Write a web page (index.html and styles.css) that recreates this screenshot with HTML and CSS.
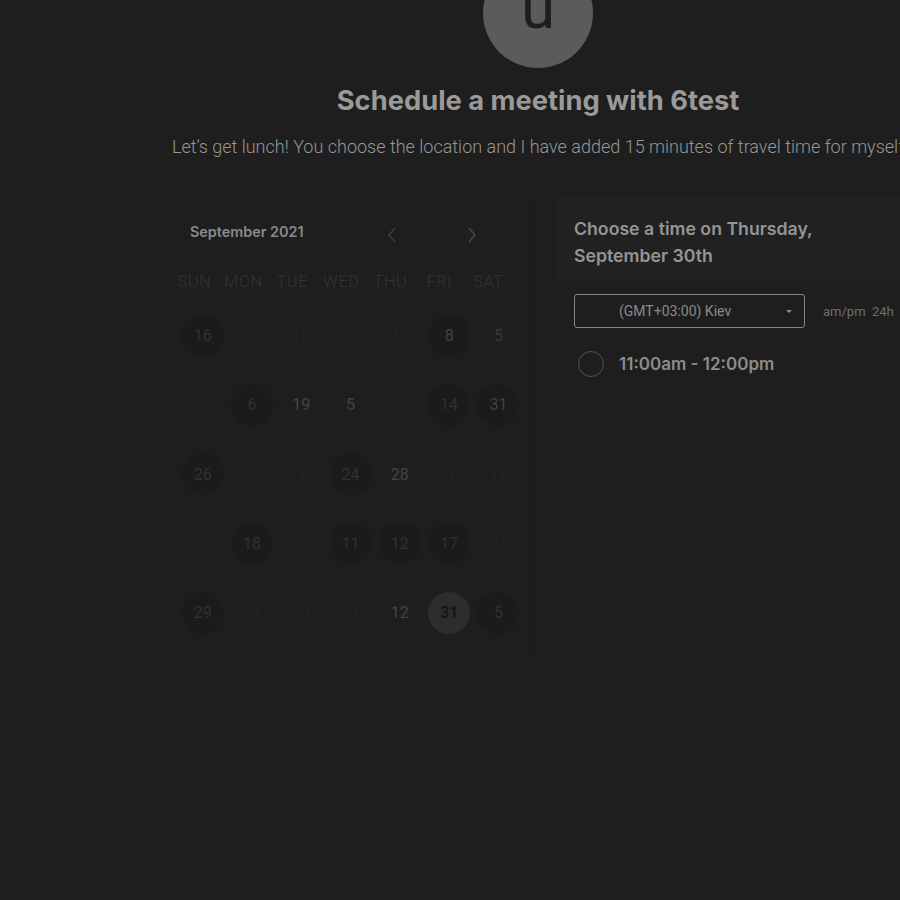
FILE: index.html
```html
<!DOCTYPE html>
<html lang="en">
<head>
<meta charset="utf-8">
<title>Schedule a meeting with 6test</title>
<link rel="stylesheet" href="styles.css">
</head>
<body>
<div class="page">
  <div class="avatar"><span>u</span></div>
  <h1 class="title">Schedule a meeting with 6test</h1>
  <p class="subtitle">Let’s get lunch! You choose the location and I have added 15 minutes of travel time for myself</p>

  <div class="booking">
    <section class="calendar">
      <div class="cal-head">
        <span class="month">September 2021</span>
        <span class="nav nav-prev"><svg width="10" height="16" viewBox="0 0 10 16"><path d="M8 1 L2 8 L8 15" fill="none" stroke="currentColor" stroke-width="1.4"/></svg></span>
        <span class="nav nav-next"><svg width="10" height="16" viewBox="0 0 10 16"><path d="M2 1 L8 8 L2 15" fill="none" stroke="currentColor" stroke-width="1.4"/></svg></span>
      </div>
      <div class="weekdays">
        <span>SUN</span><span>MON</span><span>TUE</span><span>WED</span><span>THU</span><span>FRI</span><span>SAT</span>
      </div>
      <div class="days">
        <span class="day circ">16</span><span class="day faint">17</span><span class="day faint">18</span><span class="day faint">15</span><span class="day faint">15</span><span class="day circ lit">8</span><span class="day plain dim">5</span>
        <span class="day faint">1</span><span class="day circ">6</span><span class="day plain">19</span><span class="day plain">5</span><span class="day faint">7</span><span class="day circ">14</span><span class="day circ lit">31</span>
        <span class="day circ">26</span><span class="day faint">4</span><span class="day faint">3</span><span class="day circ">24</span><span class="day plain">28</span><span class="day faint">4</span><span class="day faint">11</span>
        <span class="day faint">7</span><span class="day circ">18</span><span class="day faint">17</span><span class="day circ">11</span><span class="day circ">12</span><span class="day circ">17</span><span class="day faint">21</span>
        <span class="day circ">29</span><span class="day faint">11</span><span class="day faint">20</span><span class="day faint">21</span><span class="day plain">12</span><span class="day selected">31</span><span class="day circ">5</span>
      </div>
    </section>

    <section class="times">
      <div class="times-head">
        <h2>Choose a time on Thursday,<br>September 30th</h2>
      </div>
      <div class="tz-row">
        <div class="tz-select">
          <span class="tz-label">(GMT+03:00) Kiev</span>
          <span class="caret"></span>
        </div>
        <span class="fmt">am/pm&nbsp;&nbsp;24h</span>
      </div>
      <label class="slot">
        <span class="radio"></span>
        <span class="slot-text">11:00am - 12:00pm</span>
      </label>
    </section>
  </div>
</div>
</body>
</html>
```

FILE: styles.css
```css
html, body {
  margin: 0;
  padding: 0;
  background: #1e1e1e;
  overflow: hidden;
  height: 900px;
}

.page {
  width: 760px;
  margin-left: 158px;
  display: flex;
  flex-direction: column;
  align-items: center;
}

.avatar {
  width: 110px;
  height: 110px;
  margin-top: -42px;
  border-radius: 50%;
  background: #5b5b5b;
  display: flex;
  justify-content: center;
  align-items: flex-end;
}

.avatar span {
  font-family: Roboto, "Noto Sans", sans-serif;
  font-size: 62px;
  line-height: 62px;
  color: #1e1e1e;
  margin-bottom: 30px;
}

.title {
  margin: 18px 0 0;
  font-family: Inter, Roboto, sans-serif;
  font-weight: 700;
  font-size: 27.3px;
  line-height: 30px;
  color: #9a9a9a;
  white-space: nowrap;
}

.subtitle {
  margin: 21px 0 0;
  font-family: Roboto, "Liberation Sans", sans-serif;
  font-weight: 300;
  font-size: 18px;
  line-height: 20px;
  color: #979797;
  white-space: nowrap;
}

.booking {
  align-self: stretch;
  display: flex;
  margin-top: 39px;
}

.calendar {
  width: 364px;
  margin-left: 12px;
  border-right: 1px solid #1b1b1b;
  padding-bottom: 10px;
}

.cal-head {
  display: flex;
  align-items: center;
  height: 34px;
  margin-top: 18px;
}

.month {
  font-family: Inter, Roboto, sans-serif;
  font-weight: 600;
  font-size: 14.4px;
  color: #8a8a8a;
  margin-left: 20px;
  width: 197px;
}

.nav {
  display: flex;
  margin-top: 8px;
}

.nav-prev { color: #3e3e3e; width: 80px; }
.nav-next { color: #4b4b4b; }

.weekdays {
  display: grid;
  grid-template-columns: repeat(7, 49px);
  margin-top: 18px;
  height: 30px;
  align-items: center;
}

.weekdays span {
  text-align: center;
  font-family: Roboto, sans-serif;
  font-weight: 300;
  font-size: 16px;
  letter-spacing: 0.8px;
  color: #343434;
}

.days {
  display: grid;
  grid-template-columns: repeat(7, 49.3px);
  grid-auto-rows: 69.25px;
  margin-left: 8px;
  margin-top: 5px;
}

.day {
  width: 42px;
  height: 42px;
  justify-self: center;
  align-self: center;
  border-radius: 50%;
  display: flex;
  align-items: center;
  justify-content: center;
  font-family: Roboto, sans-serif;
  font-size: 16px;
}

.day.faint { color: #232323; }
.day.plain { color: #444444; }
.day.plain.dim { color: #383838; }
.day.circ { background: #1b1b1b; color: #313131; }
.day.circ.lit { color: #424242; }
.day.selected {
  background: #2d2d2d;
  color: #161616;
  font-weight: 700;
}

.times {
  flex: 1;
  margin-left: 22px;
}

.times-head {
  background: #212121;
  padding: 19px 17px 12px;
}

.times-head h2 {
  margin: 0;
  font-family: Inter, Roboto, sans-serif;
  font-weight: 600;
  font-size: 17.7px;
  line-height: 27px;
  color: #959595;
  white-space: nowrap;
}

.tz-row {
  display: flex;
  align-items: center;
  margin: 13px 0 0 17px;
}

.tz-select {
  width: 229px;
  height: 32px;
  border: 1px solid #858585;
  border-radius: 3px;
  display: flex;
  align-items: center;
  position: relative;
}

.tz-label {
  margin-left: 44px;
  font-family: Roboto, sans-serif;
  font-weight: 400;
  font-size: 14px;
  color: #8a8a8a;
}

.caret {
  position: absolute;
  right: 12px;
  top: 15px;
  width: 0;
  height: 0;
  border-left: 3.5px solid transparent;
  border-right: 3.5px solid transparent;
  border-top: 3.5px solid #8a8a8a;
}

.fmt {
  margin-left: 18px;
  font-family: Roboto, sans-serif;
  font-size: 13px;
  color: #6e6e6e;
  white-space: nowrap;
}

.slot {
  display: flex;
  align-items: center;
  margin: 23px 0 0 21px;
}

.radio {
  width: 24px;
  height: 24px;
  border: 1px solid #525252;
  border-radius: 50%;
}

.slot-text {
  margin-left: 15px;
  font-family: Inter, Roboto, sans-serif;
  font-weight: 600;
  font-size: 17px;
  color: #8c8c8c;
}
```
